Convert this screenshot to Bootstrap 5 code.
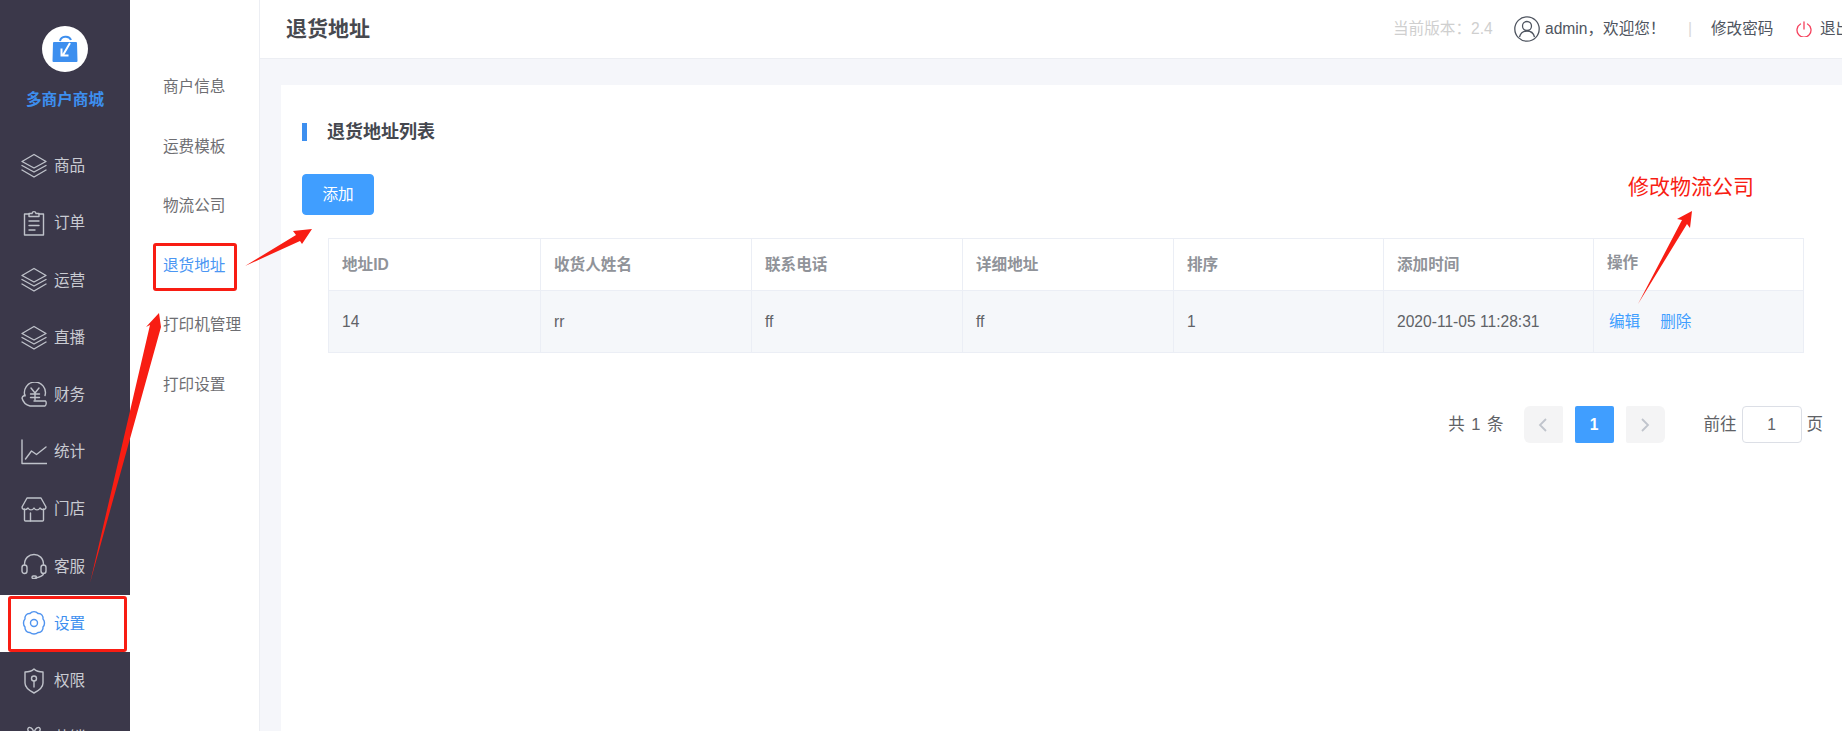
<!DOCTYPE html>
<html lang="zh">
<head>
<meta charset="utf-8">
<title>退货地址</title>
<link href="https://cdn.jsdelivr.net/npm/bootstrap@5.3.0/dist/css/bootstrap.min.css" rel="stylesheet">
<style>
html,body{height:100%;overflow:hidden}
body{font-family:"Liberation Sans","Noto Sans CJK SC",sans-serif;font-size:15.6px;color:#5a5e66;background:#fff;position:relative}
.app-shell{height:731px;width:1842px;overflow:hidden}
.side-main{width:130px;flex:0 0 130px;background:#3b384a;height:731px;overflow:hidden}
.brand-box{height:137.4px;flex:0 0 137.4px;padding-top:26px}
.brand-logo{width:46px;height:46px;flex:none;border-radius:50%;background:#fff}
.brand-name{color:#3d8fef;font-weight:700;margin-top:17px;line-height:22px;letter-spacing:0}
.side-item{height:57.2px;padding-left:21px;gap:7px;color:#c9cbd2;flex:0 0 57.2px}
.side-item svg{flex:0 0 26px;width:26px;height:26px;fill:none;stroke:#bfc2ca;stroke-width:1.4;stroke-linejoin:round;stroke-linecap:round}
.side-item.is-on{background:#fff;color:#3d8fef}
.side-item.is-on svg{stroke:#4f93ef}
.side-sub{width:130px;flex:0 0 130px;border-right:1px solid #eceef3;padding-top:57px;background:#fff}
.sub-item{height:59.5px;padding-left:33px;color:#6e6e72;white-space:nowrap}
.sub-item.is-on{color:#4a96f3}
.main-pane{width:1582px;flex:0 0 1582px;background:#f5f6fa}
.top-bar{height:59px;background:#fff;border-bottom:1px solid #eceef3;padding-left:26px;white-space:nowrap}
.top-bar>*{flex:none}
.top-title{font-size:21px;font-weight:700;color:#47494f;margin:0;line-height:58px;width:1107px}
.top-ver{color:#cfcfcf;width:121px}
.top-user{color:#4f5560;width:174px;gap:5px}
.top-user svg,.top-exit svg{flex:none}
.top-sep{color:#d8d8d8;width:23px}
.top-pwd{color:#4f5560;width:85px}
.top-exit{color:#4f5560;gap:8px}
.content-pane{padding:26px 0 0 21px;height:672px}
.list-card{background:#fff;height:100%;padding:38px 0 0 21px}
.sec-title{border-left:5px solid #3d8fef;height:18px;padding-left:20px;font-size:18px;line-height:18px;font-weight:700;color:#45484f;margin:0}
.add-btn{--bs-btn-bg:#409eff;--bs-btn-border-color:#409eff;--bs-btn-hover-bg:#409eff;--bs-btn-hover-border-color:#409eff;--bs-btn-color:#fff;--bs-btn-hover-color:#fff;width:72px;height:41px;margin-top:33px;font-size:15.6px;padding:0;border-radius:4px;display:block}
.tbl-wrap{margin:23px 38px 0 26px;width:1475px}
.addr-table{--bs-table-border-color:#ebeef5;--bs-table-bg:transparent;margin:0;table-layout:fixed;width:1475px;border-color:#ebeef5;font-size:15.6px}
.addr-table th{height:52px;padding:0 13px;vertical-align:middle;color:#909399;font-weight:700;background:#fff}
.addr-table td{height:62px;padding:0 13px;vertical-align:middle;color:#606266;background:#f5f7fa;white-space:nowrap}
.addr-table td.op-cell{padding-left:15px}
.op-head{padding-bottom:4px!important;box-shadow:inset 0 -3px 0 #fff,inset 0 -4px 0 #ebeef5}
.op-link{color:#409eff;text-decoration:none;margin-right:20px}
.pager-row{margin-top:53px;padding-right:19px;color:#606266;height:37px;font-size:16.5px}
.pager-total{margin-right:20px;word-spacing:2px}
.pager-list{margin:0;gap:13px;--bs-pagination-border-width:0}
.pager-list .page-link{width:39px;height:37px;padding:0;display:flex;align-items:center;justify-content:center;background:#f4f4f5;color:#b4b7bd;border-radius:2px;font-size:15.6px;font-weight:700;border:0}
.pager-list .active .page-link{background:#409eff;color:#fff}
.pager-jump{margin-left:39px;gap:5px}
.pager-input{width:60px;height:37px;border:1px solid #dcdfe6;border-radius:4px;text-align:center;padding:0;color:#606266;font-size:15.6px;box-shadow:none}
.note-layer{position:absolute;left:0;top:0;width:1842px;height:731px;pointer-events:none}
.note-box{position:absolute;border:3px solid #f81d13;border-radius:3px}
.note-box-a{left:153px;top:243px;width:84px;height:48px}
.note-box-b{left:8px;top:596px;width:119px;height:56px}
.note-text{position:absolute;left:1628px;top:173px;color:#f81d13;font-size:21px;line-height:28px;white-space:nowrap}
</style>
</head>
<body>
<div class="app-shell d-flex">
  <aside class="side-main d-flex flex-column">
    <div class="brand-box d-flex flex-column align-items-center">
      <div class="brand-logo d-flex align-items-center justify-content-center">
        <svg width="26" height="28" viewBox="0 0 26 28"><path d="M2 7h22a1 1 0 0 1 1 1l.5 18a1 1 0 0 1-1 1H1.500a1 1 0 0 1-1-1L1 8a1 1 0 0 1 1-1z" fill="#3d8fef"/><path d="M8 6c1-5 9-6 11-1" fill="none" stroke="#3d8fef" stroke-width="2"/><path d="M18 8l-7 12M9.500 13.500v7h7" fill="none" stroke="#fff" stroke-width="2"/></svg>
      </div>
      <div class="brand-name">多商户商城</div>
    </div>
    <div class="side-item d-flex align-items-center"><svg viewBox="0 0 26 26"><path d="M13 1.500L25 8.500 13 15 1 8.500z"/><path d="M1 12.500l12 6.500 12-6.500"/><path d="M1 17l12 7 12-7"/></svg><span>商品</span></div>
    <div class="side-item d-flex align-items-center"><svg viewBox="0 0 26 26"><path d="M8 4H3.500v21h19V4H18"/><path d="M8 6.500V3.500h3c.5-2.500 3.500-2.500 4 0h3v3z"/><path d="M8 11h10M8 15.500h10M8 20h6"/></svg><span>订单</span></div>
    <div class="side-item d-flex align-items-center"><svg viewBox="0 0 26 26"><path d="M13 1.500L25 8.500 13 15 1 8.500z"/><path d="M1 12.500l12 6.500 12-6.500"/><path d="M1 17l12 7 12-7"/></svg><span>运营</span></div>
    <div class="side-item d-flex align-items-center"><svg viewBox="0 0 26 26"><path d="M13 1.500L25 8.500 13 15 1 8.500z"/><path d="M1 12.500l12 6.500 12-6.500"/><path d="M1 17l12 7 12-7"/></svg><span>直播</span></div>
    <div class="side-item d-flex align-items-center"><svg viewBox="0 0 26 26"><path d="M4 14A10.500 10.500 0 1 1 24 13.500"/><path d="M10 6l4 5 4-5M9.500 12h9M9.500 15.500h9M14 11v7"/><path d="M4 13c-2 1-3 2-3 3 1 4 4 7 8 8h15c1.500-1 1.500-4 .5-5H13"/></svg><span>财务</span></div>
    <div class="side-item d-flex align-items-center"><svg viewBox="0 0 26 26"><path d="M1 1v23.500h25"/><path d="M4.500 20l6-8 5 3.500L25 8"/></svg><span>统计</span></div>
    <div class="side-item d-flex align-items-center"><svg viewBox="0 0 26 26"><path d="M6 2h14l5 9c0 3-4 3.500-6 1-1.500 2.500-4.500 2.500-6 0-1.500 2.500-4.500 2.500-6 0-2 2.500-6 2-6-1z"/><path d="M3.500 13v11a1 1 0 0 0 1 1h17a1 1 0 0 0 1-1V13"/><path d="M9.500 25v-8"/></svg><span>门店</span></div>
    <div class="side-item d-flex align-items-center"><svg viewBox="0 0 26 26"><path d="M3.500 12C3 -2 23 -2 22.500 12"/><rect x="1" y="12" width="5" height="8.500" rx="2.500"/><rect x="20" y="12" width="5" height="8.500" rx="2.500"/><path d="M22.500 20.500c0 2-3 3.500-8 4.500"/><rect x="11" y="23" width="4.500" height="2.500" rx="1.200"/></svg><span>客服</span></div>
    <div class="side-item is-on d-flex align-items-center"><svg viewBox="0 0 26 26"><path d="M9 3.500c2-2.500 6-2.500 8 0 3.500-.5 5.500 3 5 5.500 2 2 2 6 0 8 .5 3-2 6-5 5.500-2 2-6 2-8 0-3 .5-5.500-2.500-5-5.500-2-2-2-6 0-8-.5-2.500 1.500-6 5-5.500z"/><circle cx="13" cy="13" r="3.500"/></svg><span>设置</span></div>
    <div class="side-item d-flex align-items-center"><svg viewBox="0 0 26 26"><path d="M4 4c4 0 7-1 9-3 2 2 5 3 9 3v11c0 4-5 8-9 10-4-2-9-6-9-10z"/><circle cx="13" cy="10.500" r="2.500"/><path d="M13 13v6"/></svg><span>权限</span></div>
    <div class="side-item d-flex align-items-center"><svg viewBox="0 0 26 26"><path d="M2 8h22v5H2zM4 13v12h18V13M13 8v17"/><path d="M13 8C9 8 6 6 7 3.500S12 3 13 8c1-5 5-7 6-4.500S17 8 13 8z"/></svg><span>营销</span></div>
  </aside>

  <nav class="side-sub d-flex flex-column">
    <div class="sub-item d-flex align-items-center">商户信息</div>
    <div class="sub-item d-flex align-items-center">运费模板</div>
    <div class="sub-item d-flex align-items-center">物流公司</div>
    <div class="sub-item is-on d-flex align-items-center">退货地址</div>
    <div class="sub-item d-flex align-items-center">打印机管理</div>
    <div class="sub-item d-flex align-items-center">打印设置</div>
  </nav>

  <main class="main-pane d-flex flex-column">
    <header class="top-bar d-flex align-items-center">
      <h1 class="top-title">退货地址</h1>
      <span class="top-ver">当前版本：2.4</span>
      <span class="top-user d-flex align-items-center">
        <svg width="26" height="26" viewBox="0 0 26 26" fill="none" stroke="#4f5560" stroke-width="1.300"><circle cx="13" cy="13" r="12.200"/><circle cx="13" cy="10" r="4.500"/><path d="M5.500 21c1-4 4-6 7.500-6s6.500 2 7.500 6"/></svg>
        <span>admin，欢迎您！</span>
      </span>
      <span class="top-sep">|</span>
      <span class="top-pwd">修改密码</span>
      <span class="top-exit d-flex align-items-center">
        <svg width="16" height="16" viewBox="0 0 16 16" fill="none" stroke="#f5405c" stroke-width="1.300" stroke-linecap="round"><path d="M8 1v7"/><path d="M4.500 3A7 7 0 1 0 11.500 3"/></svg>
        <span>退出</span>
      </span>
    </header>
    <div class="content-pane">
      <section class="list-card">
        <h2 class="sec-title">退货地址列表</h2>
        <button type="button" class="btn add-btn">添加</button>
        <div class="tbl-wrap">
          <table class="table table-bordered addr-table">
            <colgroup><col style="width:212px"><col style="width:211px"><col style="width:211px"><col style="width:211px"><col style="width:210px"><col style="width:210px"><col style="width:210px"></colgroup>
            <thead>
              <tr><th>地址ID</th><th>收货人姓名</th><th>联系电话</th><th>详细地址</th><th>排序</th><th>添加时间</th><th class="op-head">操作</th></tr>
            </thead>
            <tbody>
              <tr><td>14</td><td>rr</td><td>ff</td><td>ff</td><td>1</td><td>2020-11-05 11:28:31</td><td class="op-cell"><a class="op-link" href="#">编辑</a><a class="op-link" href="#">删除</a></td></tr>
            </tbody>
          </table>
        </div>
        <div class="pager-row d-flex justify-content-end align-items-center">
          <span class="pager-total">共 1 条</span>
          <ul class="pagination pager-list">
            <li class="page-item disabled"><a class="page-link" href="#" aria-label="上一页"><svg width="10" height="14" viewBox="0 0 10 14" fill="none" stroke="#c0c4cc" stroke-width="1.800"><path d="M8 1L2 7l6 6"/></svg></a></li>
            <li class="page-item active"><a class="page-link" href="#">1</a></li>
            <li class="page-item disabled"><a class="page-link" href="#" aria-label="下一页"><svg width="10" height="14" viewBox="0 0 10 14" fill="none" stroke="#c0c4cc" stroke-width="1.800"><path d="M2 1l6 6-6 6"/></svg></a></li>
          </ul>
          <span class="pager-jump d-flex align-items-center"><span>前往</span><input class="form-control pager-input" value="1" aria-label="页码"><span>页</span></span>
        </div>
      </section>
    </div>
  </main>
</div>

<div class="note-layer">
  <div class="note-box note-box-a"></div>
  <div class="note-box note-box-b"></div>
  <div class="note-text">修改物流公司</div>
  <svg width="1842" height="731" viewBox="0 0 1842 731">
    <path fill="#f81d13" d="M90 583L150 325 146 327 159 313 161 327z"/>
    <path fill="#f81d13" d="M245 266L296 235 293 231 312 229 302 244 300 241z"/>
    <path fill="#f81d13" d="M1638 304L1682 220 1677 219 1692 211 1690 228 1687 224z"/>
  </svg>
</div>
<script src="https://cdn.jsdelivr.net/npm/bootstrap@5.3.0/dist/js/bootstrap.bundle.min.js"></script>
</body>
</html>
